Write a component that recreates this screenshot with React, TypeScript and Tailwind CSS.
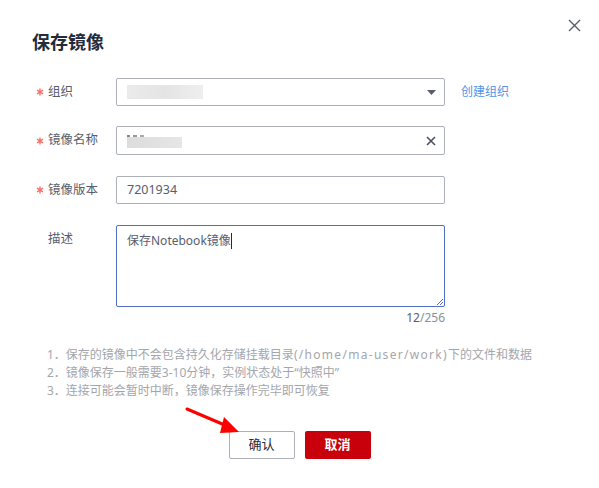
import React from "react";

const font = { fontFamily: '"Noto Sans", "Noto Sans CJK SC", sans-serif' };

function Label({ text, required }: { text: string; required?: boolean }) {
  return (
    <div className="w-[80px] shrink-0 flex items-center h-[28px] text-[12.5px] text-[#575d6c]">
      <span className={`w-[12px] flex items-center ${required ? "" : "invisible"}`}>
        <svg width="8" height="8" viewBox="0 0 8 8">
          <path d="M4 0.5 V7.5 M1 2.2 L7 5.8 M7 2.2 L1 5.8" stroke="#f66f6a" strokeWidth="1.4" fill="none" />
        </svg>
      </span>
      <span>{text}</span>
    </div>
  );
}

export default function App() {
  return (
    <div className="relative w-[599px] h-[488px] bg-white overflow-hidden" style={font}>
      {/* close */}
      <svg className="absolute left-[568px] top-[19px]" width="13" height="13" viewBox="0 0 13 13">
        <path d="M1 1 L12 12 M12 1 L1 12" stroke="#575d6c" strokeWidth="1.4" fill="none" />
      </svg>

      <div className="pt-[29px] pl-[32px]">
        <h1 className="text-[18px] font-bold text-[#252b3a] leading-[26px]">保存镜像</h1>
      </div>

      <div className="pl-[36px] pt-[23px]">
        {/* 组织 */}
        <div className="flex items-center mb-[20px]">
          <Label text="组织" required />
          <div className="relative w-[329px] h-[28px] border border-[#adb0b8] rounded-[2px] flex items-center">
            <div className="ml-[10px] w-[76px] h-[14px] bg-gradient-to-r from-[#ebebeb] via-[#e4e4e4] to-[#efefef]" />
            <svg className="absolute right-[8px] top-[11px]" width="9" height="5" viewBox="0 0 9 5">
              <path d="M0 0 H9 L4.5 5 Z" fill="#575d6c" />
            </svg>
          </div>
          <span className="ml-[16px] text-[12px] text-[#5294e5]">创建组织</span>
        </div>

        {/* 镜像名称 */}
        <div className="flex items-center mb-[21px]">
          <Label text="镜像名称" required />
          <div className="relative w-[329px] h-[29px] border border-[#adb0b8] rounded-[2px]">
            <div className="absolute left-[10px] top-[8px] flex gap-[3px]">
              <span className="w-[3px] h-[2px] bg-[#888]" />
              <span className="w-[4px] h-[2px] bg-[#999]" />
              <span className="w-[4px] h-[2px] bg-[#aaa]" />
            </div>
            <div className="absolute left-[10px] top-[10px] w-[55px] h-[11px] bg-gradient-to-r from-[#dcdcdc] to-[#e6e6e6]" />
            <svg className="absolute right-[8px] top-[9px]" width="10" height="10" viewBox="0 0 10 10">
              <path d="M1 1 L9 9 M9 1 L1 9" stroke="#4b505c" strokeWidth="1.6" fill="none" />
            </svg>
          </div>
        </div>

        {/* 镜像版本 */}
        <div className="flex items-center mb-[21px]">
          <Label text="镜像版本" required />
          <div className="w-[329px] h-[28px] border border-[#adb0b8] rounded-[2px] flex items-center px-[10px] text-[12.5px] text-[#575d6c]">
            7201934
          </div>
        </div>

        {/* 描述 */}
        <div className="flex items-start">
          <Label text="描述" />
          <div className="flex flex-col items-end">
            <div className="relative w-[329px] h-[82px] border border-[#526ecc] rounded-[2px] px-[10px] pt-[5px] text-[12px] text-[#575d6c] leading-[20px]">
              <span>保存Notebook镜像</span>
              <span className="inline-block w-[1px] h-[16px] bg-[#252b3a] align-[-4px]" />
              <svg className="absolute right-[1px] bottom-[1px]" width="7" height="7" viewBox="0 0 7 7">
                <path d="M7 1 L1 7 M7 4 L4 7" stroke="#526ecc" strokeWidth="1" fill="none" />
              </svg>
            </div>
            <div className="mt-[2px] text-[12px] leading-[18px] text-[#8a8e99]">
              <span className="text-[#575d6c]">12</span>/256
            </div>
          </div>
        </div>
      </div>

      {/* notes */}
      <div className="pl-[47px] mt-[19px] text-[12px] leading-[18px] text-[#a3a6ad]">
        <p>
          1．保存的镜像中不会包含持久化存储挂载目录<span className="tracking-[1.3px]">(/home/ma-user/work)</span>下的文件和数据
        </p>
        <p>2．镜像保存一般需要3-10分钟，实例状态处于“快照中”</p>
        <p>3．连接可能会暂时中断，镜像保存操作完毕即可恢复</p>
      </div>

      {/* buttons */}
      <div className="flex justify-center gap-[10px] mt-[31px]">
        <button className="w-[66px] h-[28px] border border-[#adb0b8] rounded-[2px] bg-white text-[13px] text-[#252b3a]">
          确认
        </button>
        <button className="w-[66px] h-[28px] rounded-[2px] bg-[#c7000b] text-[13px] font-bold text-white">
          取消
        </button>
      </div>

      {/* red arrow annotation */}
      <svg className="absolute left-[180px] top-[400px]" width="70" height="40" viewBox="0 0 70 40">
        <path d="M7 9 L47 26" stroke="#ff0000" strokeWidth="3" strokeLinecap="round" fill="none" />
        <path d="M44 17 L59 32 L40 33 Z" fill="#ff0000" />
      </svg>
    </div>
  );
}
